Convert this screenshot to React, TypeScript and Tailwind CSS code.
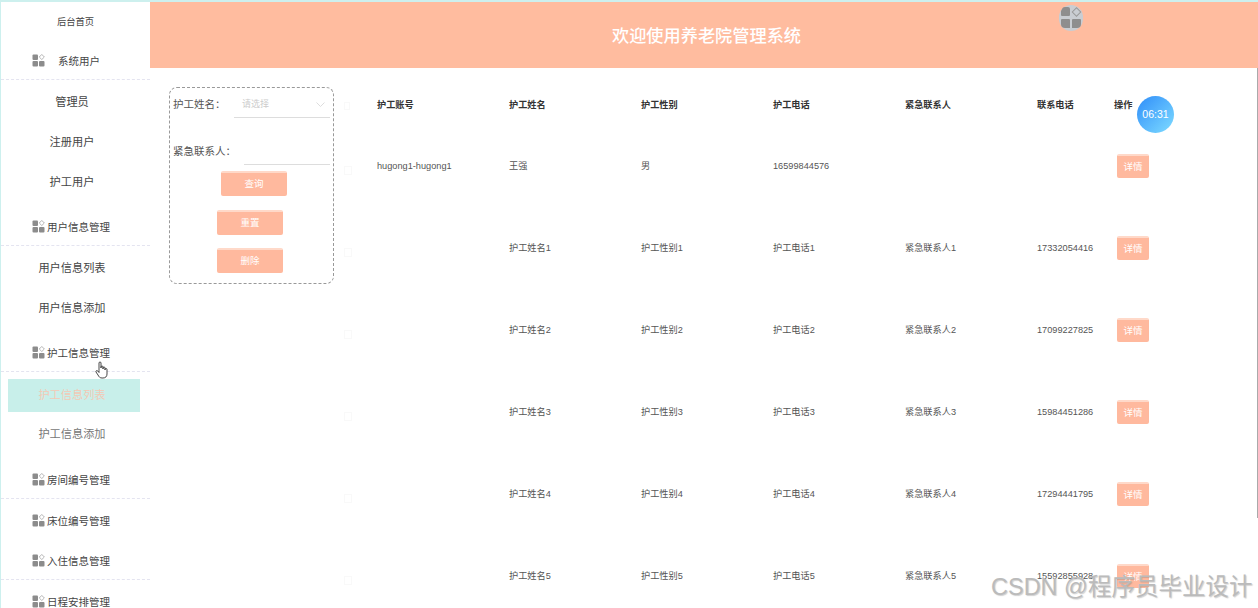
import React from "react";

const cjk = { fontFamily: '"Liberation Sans", "Noto Sans CJK SC", sans-serif' };

const GridIcon = () => (
  <svg width="13" height="13" viewBox="0 0 13 13" className="-mt-[3px] shrink-0">
    <rect x="0.5" y="0.5" width="5.5" height="5.5" rx="1" fill="#8c8c8c" />
    <rect x="8" y="1.2" width="3.6" height="3.6" transform="rotate(45 9.8 3)" fill="none" stroke="#a8a8a8" strokeWidth="0.8" />
    <rect x="0.5" y="7" width="5.5" height="5.5" rx="1" fill="#8c8c8c" />
    <rect x="7" y="7" width="5.5" height="5.5" rx="1" fill="#8c8c8c" />
  </svg>
);

const Group = ({ title, border = true, wide = false, top = 0 }: { title: string; border?: boolean; wide?: boolean; top?: number }) => (
  <div
    className={`flex h-[37px] items-center pl-[31px] pt-[2px] text-[10.5px] text-[#444] ${border ? "border-b border-dashed border-[#e4e4f0]" : ""}`}
    style={{ marginTop: top }}
  >
    <GridIcon />
    <span className={wide ? "ml-[13px]" : "ml-[2px]"}>{title}</span>
  </div>
);

const SubItem = ({ title, muted = false }: { title: string; muted?: boolean }) => (
  <div className={`flex h-10 items-center justify-center pr-[7px] pt-px text-[11.2px] ${muted ? "text-[#777]" : "text-[#444]"}`}>
    {title}
  </div>
);

const Sidebar = () => (
  <aside className="h-[620px] w-[149px] shrink-0 rounded-tl-lg bg-white">
    <div className="flex h-[39px] items-center justify-center pt-[2px] text-[9.3px] text-[#444]">后台首页</div>
    <Group title="系统用户" wide top={2} />
    <div className="mt-[2px]">
      <SubItem title="管理员" />
      <SubItem title="注册用户" />
      <SubItem title="护工用户" />
    </div>
    <Group title="用户信息管理" top={7} />
    <div className="mt-[2px]">
      <SubItem title="用户信息列表" />
      <SubItem title="用户信息添加" />
    </div>
    <Group title="护工信息管理" top={7} />
    <div className="ml-[7px] mt-[7px] flex h-[33px] w-[132px] items-center justify-center pr-[4px] text-[11.2px] text-[#f3c9b5] bg-[#c8efea]">
      护工信息列表
    </div>
    <div className="mt-[2px]">
      <SubItem title="护工信息添加" muted />
    </div>
    <Group title="房间编号管理" top={8} />
    <div className="mt-[3px]">
      <Group title="床位编号管理" border={false} />
    </div>
    <Group title="入住信息管理" top={4} />
    <Group title="日程安排管理" border={false} top={3} />
  </aside>
);

const PeachButton = ({ label, className }: { label: string; className: string }) => (
  <button className={`flex items-center justify-center rounded-[2px] border-t-2 border-[#ffd9c9] bg-[#ffb99e] text-[9.5px] text-white ${className}`}>
    {label}
  </button>
);

const SearchPanel = () => (
  <div className="ml-[19px] mt-[19px] h-[197px] w-[165px] shrink-0 rounded-lg border border-dashed border-[#999] pl-[3px] pr-[3px] text-[10.5px] text-[#555]">
    <div className="mt-[3px] flex h-[27px] items-center">
      <span className="w-[61px] shrink-0">护工姓名：</span>
      <div className="flex h-[27px] w-[96px] items-center justify-between border-b border-[#ddd] pl-2 pr-[5px] pt-px text-[9px] text-[#ccc]">
        请选择
        <svg width="9" height="5" viewBox="0 0 9 5">
          <path d="M0.5 0.5 L4.5 4.5 L8.5 0.5" fill="none" stroke="#ddd" />
        </svg>
      </div>
    </div>
    <div className="mt-5 flex h-[27px] items-center">
      <span className="w-[71px] shrink-0">紧急联系人：</span>
      <div className="h-[27px] w-[86px] border-b border-[#ddd]" />
    </div>
    <PeachButton label="查询" className="ml-[48px] mt-[6px] h-[25px] w-[66px]" />
    <PeachButton label="重置" className="ml-[44px] mt-[14px] h-[25px] w-[66px]" />
    <PeachButton label="删除" className="ml-[44px] mt-[13px] h-[25px] w-[66px]" />
  </div>
);

const headers = ["护工账号", "护工姓名", "护工性别", "护工电话", "紧急联系人", "联系电话"];

const rows = [
  ["hugong1-hugong1", "王强", "男", "16599844576", "", ""],
  ["", "护工姓名1", "护工性别1", "护工电话1", "紧急联系人1", "17332054416"],
  ["", "护工姓名2", "护工性别2", "护工电话2", "紧急联系人2", "17099227825"],
  ["", "护工姓名3", "护工性别3", "护工电话3", "紧急联系人3", "15984451286"],
  ["", "护工姓名4", "护工性别4", "护工电话4", "紧急联系人4", "17294441795"],
  ["", "护工姓名5", "护工性别5", "护工电话5", "紧急联系人5", "15592855928"],
];

const Table = () => (
  <div className="ml-[10px] mt-4 flex-1">
    <div className="flex h-[41px] items-center pt-[2px] text-[9.2px] font-bold text-[#333]">
      <div className="w-[33px] shrink-0">
        <div className="h-2 w-[6px] border border-[#f9f9f9]" />
      </div>
      {headers.map((h, i) => (
        <div key={h} className={i === 5 ? "w-[77px] shrink-0" : "w-[132px] shrink-0"}>
          {h}
        </div>
      ))}
      <div>操作</div>
    </div>
    {rows.map((row) => (
      <div key={row[1]} className="flex h-[82px] items-center text-[9.2px] text-[#555]">
        <div className="w-[33px] shrink-0">
          <div className="mt-2 h-[9px] w-2 border border-[#f9f9f9]" />
        </div>
        {row.map((cell, i) => (
          <div key={i} className={`pt-[2px] ${i === 5 ? "w-[77px] shrink-0" : "w-[132px] shrink-0"}`}>
            {cell}
          </div>
        ))}
        <PeachButton label="详情" className="ml-[3px] h-6 w-8" />
      </div>
    ))}
  </div>
);

export default function App() {
  return (
    <div className="relative h-[608px] w-[1258px] overflow-hidden bg-[#cdf0ee] pl-px pt-[2px]" style={cjk}>
      <div className="flex h-[606px] bg-white">
        <Sidebar />
        <main className="min-w-0 flex-1">
          <header className="flex h-[66px] items-center justify-center bg-[#ffbc9f] pl-[5px] pt-[4px] text-[17.2px] font-medium text-white">
            欢迎使用养老院管理系统
          </header>
          <div className="flex">
            <SearchPanel />
            <Table />
          </div>
        </main>
      </div>

      {/* avatar on the header */}
      <div className="absolute left-[1059px] top-[5px] flex h-[26px] w-6 items-center justify-center rounded-full bg-[#c9cdd2]">
        <svg width="22" height="24" viewBox="0 0 22 24">
          <path d="M2 3 a3 3 0 0 1 3-2 h3 a2 2 0 0 1 2 2 v6 a1 1 0 0 1-1 1 H2 a1 1 0 0 1-1-1 V5 z" fill="#8e8e8e" />
          <rect x="13.5" y="3" width="6" height="6" transform="rotate(45 16.5 6)" fill="none" stroke="#9a9a9a" />
          <path d="M2 13 h7 a1 1 0 0 1 1 1 v8 H5 a4 4 0 0 1-4-4 v-4 a1 1 0 0 1 1-1 z" fill="#8e8e8e" />
          <path d="M12 14 a1 1 0 0 1 1-1 h7 a1 1 0 0 1 1 1 v4 a4 4 0 0 1-4 4 h-5 z" fill="#8e8e8e" />
        </svg>
      </div>

      {/* clock bubble */}
      <div className="absolute left-[1137px] top-[96px] flex h-[37px] w-[37px] items-center justify-center rounded-full bg-gradient-to-br from-[#2f8cf8] to-[#7fdcff] text-[10.5px] text-white">
        06:31
      </div>

      {/* hand cursor */}
      <svg className="absolute left-[95px] top-[361px]" width="14" height="18" viewBox="0 0 14 18">
        <path
          d="M4 9.5 V2 a1 1 0 0 1 2 0 V7 V6 a1 1 0 0 1 2 0 V8 V7 a1 1 0 0 1 2 0 V9 V8.5 a1 1 0 0 1 2 0 V13 c0 2.5-1.5 4-4 4 H7 c-2 0-3-1-4-3 L1 11 c-.6-1.2 1-2 1.8-1 L4 11.5 z"
          fill="#fff"
          stroke="#333"
          strokeWidth="0.9"
        />
      </svg>

      {/* scrollbar edge */}
      <div className="absolute right-0 top-[68px] h-[450px] w-px bg-[#aaa]" />

      {/* watermark */}
      <div
        className="absolute left-[991px] top-[570px] whitespace-nowrap text-[23.5px] text-[#bbbbbb]"
        style={{ textShadow: "1px 1px 1px rgba(120,120,120,0.35)" }}
      >
        CSDN @程序员毕业设计
      </div>
    </div>
  );
}
